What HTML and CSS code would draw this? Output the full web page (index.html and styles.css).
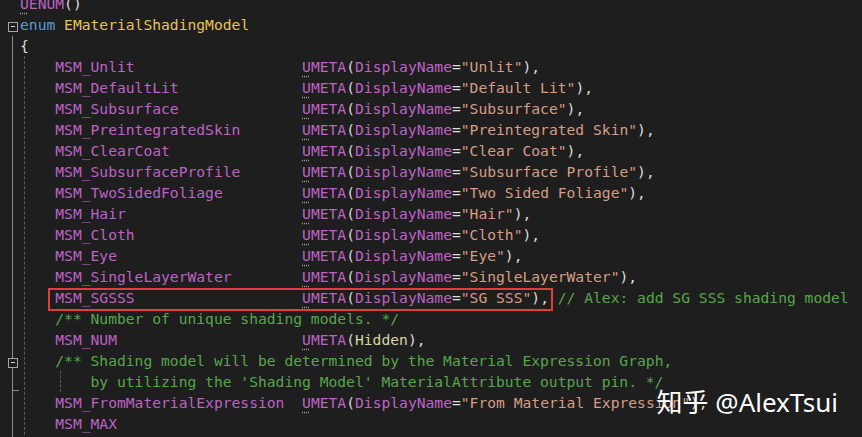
FILE: index.html
```html
<!DOCTYPE html>
<html lang="en">
<head>
    <meta charset="UTF-8">
    <meta name="viewport" content="width=device-width, initial-scale=1.0">
    <title>EMaterialShadingModel</title>
    <link rel="stylesheet" href="styles.css">
</head>
<body>
    <div class="editor">
        <!-- fold markers -->
        <div class="gutter">
            <div class="cell"></div>
            <div class="cell"><span class="fold-box"></span></div>
            <div class="fold-body">
                <div class="cell"></div>
                <div class="cell"></div>
                <div class="cell"></div>
                <div class="cell"></div>
                <div class="cell"></div>
                <div class="cell"></div>
                <div class="cell"></div>
                <div class="cell"></div>
                <div class="cell"></div>
                <div class="cell"></div>
                <div class="cell"></div>
                <div class="cell"></div>
                <div class="cell"></div>
                <div class="cell"></div>
                <div class="cell"></div>
                <div class="cell"><span class="fold-box"></span></div>
                <div class="cell fold-end"></div>
            </div>
        </div>

        <!-- source -->
        <div class="code">
            <div class="line"><span class="mac hint">U</span><span class="mac">ENUM</span>()</div>
            <div class="line"><span class="kw">enum</span> <span class="type">EMaterialShadingModel</span></div>
            <div class="line">{</div>
            <div class="block">
                <div class="line"><span class="mac">MSM_Unlit</span>                   <span class="mac hint">U</span><span class="mac">META</span>(<span class="mac">DisplayName</span>=<span class="str">"Unlit"</span>),</div>
                <div class="line"><span class="mac">MSM_DefaultLit</span>              <span class="mac hint">U</span><span class="mac">META</span>(<span class="mac">DisplayName</span>=<span class="str">"Default Lit"</span>),</div>
                <div class="line"><span class="mac">MSM_Subsurface</span>              <span class="mac hint">U</span><span class="mac">META</span>(<span class="mac">DisplayName</span>=<span class="str">"Subsurface"</span>),</div>
                <div class="line"><span class="mac">MSM_PreintegratedSkin</span>       <span class="mac hint">U</span><span class="mac">META</span>(<span class="mac">DisplayName</span>=<span class="str">"Preintegrated Skin"</span>),</div>
                <div class="line"><span class="mac">MSM_ClearCoat</span>               <span class="mac hint">U</span><span class="mac">META</span>(<span class="mac">DisplayName</span>=<span class="str">"Clear Coat"</span>),</div>
                <div class="line"><span class="mac">MSM_SubsurfaceProfile</span>       <span class="mac hint">U</span><span class="mac">META</span>(<span class="mac">DisplayName</span>=<span class="str">"Subsurface Profile"</span>),</div>
                <div class="line"><span class="mac">MSM_TwoSidedFoliage</span>         <span class="mac hint">U</span><span class="mac">META</span>(<span class="mac">DisplayName</span>=<span class="str">"Two Sided Foliage"</span>),</div>
                <div class="line"><span class="mac">MSM_Hair</span>                    <span class="mac hint">U</span><span class="mac">META</span>(<span class="mac">DisplayName</span>=<span class="str">"Hair"</span>),</div>
                <div class="line"><span class="mac">MSM_Cloth</span>                   <span class="mac hint">U</span><span class="mac">META</span>(<span class="mac">DisplayName</span>=<span class="str">"Cloth"</span>),</div>
                <div class="line"><span class="mac">MSM_Eye</span>                     <span class="mac hint">U</span><span class="mac">META</span>(<span class="mac">DisplayName</span>=<span class="str">"Eye"</span>),</div>
                <div class="line"><span class="mac">MSM_SingleLayerWater</span>        <span class="mac hint">U</span><span class="mac">META</span>(<span class="mac">DisplayName</span>=<span class="str">"SingleLayerWater"</span>),</div>
                <div class="line"><span class="mark"><span class="mac">MSM_SGSSS</span>                   <span class="mac hint">U</span><span class="mac">META</span>(<span class="mac">DisplayName</span>=<span class="str">"SG SSS"</span>),</span> <span class="cmt">// Alex: add SG SSS shading model</span></div>
                <div class="line"><span class="cmt">/** Number of unique shading models. */</span></div>
                <div class="line"><span class="mac">MSM_NUM</span>                     <span class="mac hint">U</span><span class="mac">META</span>(<span class="arg">Hidden</span>),</div>
                <div class="line"><span class="cmt">/** Shading model will be determined by the Material Expression Graph,</span></div>
                <div class="sub">
                    <div class="line"><span class="cmt">by utilizing the 'Shading Model' MaterialAttribute output pin. */</span></div>
                </div>
                <div class="line"><span class="mac">MSM_FromMaterialExpression</span>  <span class="mac hint">U</span><span class="mac">META</span>(<span class="mac">DisplayName</span>=<span class="str">"From Material Expression"</span>),</div>
                <div class="line"><span class="mac">MSM_MAX</span></div>
                <div class="line"></div>
            </div>
        </div>
    </div>

    <div class="watermark">知乎 @AlexTsui</div>
</body>
</html>
```

FILE: styles.css
```css
body {
    margin: 0;
    background-color: #1e1e1e;
    overflow: hidden;
}
.editor {
    display: flex;
    height: 437px;
    overflow: hidden;
    font-family: "DejaVu Sans Mono", "Liberation Mono", monospace;
    font-size: 14.65px;
    line-height: 21px;
    color: #dcdcdc;
}

/* gutter with fold markers */
.gutter {
    width: 20px;
    flex: none;
    display: flex;
    flex-direction: column;
    margin-top: -6px;
}
.cell {
    height: 21px;
    display: flex;
    align-items: center;
}
.fold-box {
    width: 8px;
    height: 8px;
    margin-left: 8px;
    margin-top: 2px;
    border: 1px solid #a5a5a5;
    background-color: #1e1e1e;
    display: flex;
    align-items: center;
    justify-content: center;
}
.fold-box::after {
    content: "";
    width: 4px;
    height: 1px;
    background-color: #d4d4d4;
}
.fold-body {
    flex: 1;
    margin-left: 12px;
    border-left: 1px solid #8e8e8e;
}
.fold-body .fold-box {
    margin-left: -5px;
}
.fold-end::after {
    content: "";
    width: 6px;
    height: 1px;
    background-color: #8e8e8e;
    align-self: flex-end;
    margin-bottom: 2px;
}

/* code */
.code {
    flex: 1;
    margin-top: -7px;
}
.line {
    height: 21px;
    white-space: pre;
}
.block,
.sub {
    margin-left: 0.5ch;
    border-left: 1px dashed #5c5c5c;
    padding-left: calc(3.5ch - 1px);
}

.kw { color: #569cd6; }
.type { color: #e6c35c; }
.mac { color: #bd63c5; }
.str { color: #d69d85; }
.cmt { color: #57a64a; }
.arg { color: #d7d7a3; }
.hint {
    text-decoration: underline dotted #9a9a9a;
    text-underline-offset: 4px;
}

/* red annotation box */
.mark {
    position: relative;
}
.mark::after {
    content: "";
    position: absolute;
    left: -7px;
    right: -4px;
    top: -1px;
    bottom: -5px;
    border: 2px solid #e23c3c;
}

.watermark {
    position: absolute;
    right: 24px;
    top: 389px;
    color: #ffffff;
    font-family: "Noto Sans", "Noto Sans CJK SC", sans-serif;
    font-size: 26px;
    line-height: 1;
}
```
